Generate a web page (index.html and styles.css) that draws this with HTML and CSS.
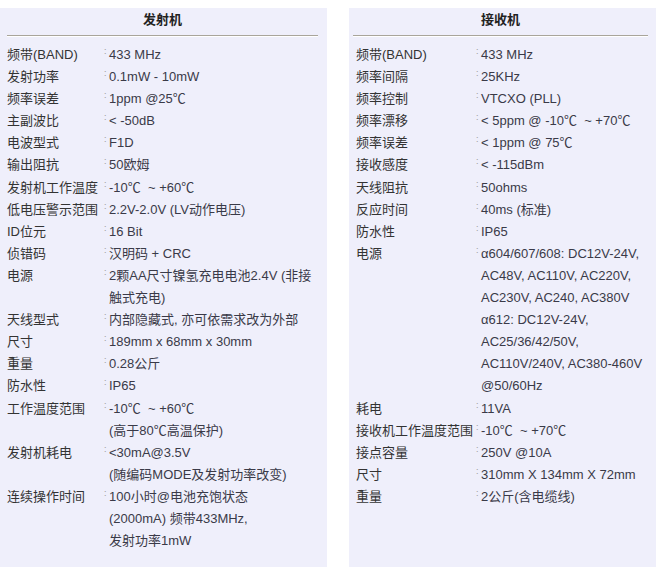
FILE: index.html
```html
<!DOCTYPE html>
<html lang="zh-CN">
<head>
<meta charset="utf-8">
<link rel="stylesheet" href="styles.css">
</head>
<body>
<div class="wrap">
  <section class="panel panel-tx">
    <h2 class="title">发射机</h2>
    <hr class="rule">
    <dl class="specs">
      <dt>频带(BAND)</dt><dd>433 MHz</dd>
      <dt>发射功率</dt><dd>0.1mW - 10mW</dd>
      <dt>频率误差</dt><dd>1ppm @25℃</dd>
      <dt>主副波比</dt><dd>&lt; -50dB</dd>
      <dt>电波型式</dt><dd>F1D</dd>
      <dt>输出阻抗</dt><dd>50欧姆</dd>
      <dt>发射机工作温度</dt><dd>-10℃ &nbsp;~ +60℃</dd>
      <dt>低电压警示范围</dt><dd>2.2V-2.0V (LV动作电压)</dd>
      <dt>ID位元</dt><dd>16 Bit</dd>
      <dt>侦错码</dt><dd>汉明码 + CRC</dd>
      <dt>电源</dt><dd>2颗AA尺寸镍氢充电电池2.4V (非接<br>触式充电)</dd>
      <dt>天线型式</dt><dd>内部隐藏式, 亦可依需求改为外部</dd>
      <dt>尺寸</dt><dd>189mm x 68mm x 30mm</dd>
      <dt>重量</dt><dd>0.28公斤</dd>
      <dt>防水性</dt><dd>IP65</dd>
      <dt>工作温度范围</dt><dd>-10℃ &nbsp;~ +60℃<br>(高于80℃高温保护)</dd>
      <dt>发射机耗电</dt><dd>&lt;30mA@3.5V<br>(随编码MODE及发射功率改变)</dd>
      <dt>连续操作时间</dt><dd>100小时@电池充饱状态<br>(2000mA) 频带433MHz,<br>发射功率1mW</dd>
    </dl>
  </section>
  <section class="panel panel-rx">
    <h2 class="title">接收机</h2>
    <hr class="rule">
    <dl class="specs">
      <dt>频带(BAND)</dt><dd>433 MHz</dd>
      <dt>频率间隔</dt><dd>25KHz</dd>
      <dt>频率控制</dt><dd>VTCXO (PLL)</dd>
      <dt>频率漂移</dt><dd>&lt; 5ppm @ -10℃ &nbsp;~ +70℃</dd>
      <dt>频率误差</dt><dd>&lt; 1ppm @ 75℃</dd>
      <dt>接收感度</dt><dd>&lt; -115dBm</dd>
      <dt>天线阻抗</dt><dd>50ohms</dd>
      <dt>反应时间</dt><dd>40ms (标准)</dd>
      <dt>防水性</dt><dd>IP65</dd>
      <dt>电源</dt><dd>α604/607/608: DC12V-24V,<br>AC48V, AC110V, AC220V,<br>AC230V, AC240, AC380V<br>α612: DC12V-24V,<br>AC25/36/42/50V,<br>AC110V/240V, AC380-460V<br>@50/60Hz</dd>
      <dt>耗电</dt><dd>11VA</dd>
      <dt>接收机工作温度范围</dt><dd>-10℃ &nbsp;~ +70℃</dd>
      <dt>接点容量</dt><dd>250V @10A</dd>
      <dt>尺寸</dt><dd>310mm X 134mm X 72mm</dd>
      <dt>重量</dt><dd>2公斤(含电缆线)</dd>
    </dl>
  </section>
</div>
</body>
</html>
```

FILE: styles.css
```css
html, body {
  margin: 0;
  padding: 0;
  background: #ffffff;
}

body {
  font-family: "Liberation Sans", Arial, "Noto Sans CJK SC", sans-serif;
  font-size: 13px;
  color: #333333;
  height: 567px;
  overflow: hidden;
}

.wrap {
  display: flex;
  gap: 22px;
  padding-top: 8px;
  align-items: stretch;
  height: 567px;
  box-sizing: border-box;
}

.panel {
  background: #efeffb;
  box-sizing: border-box;
}

.panel-tx {
  width: 327px;
  padding: 0 9px 0 7px;
}

.panel-rx {
  width: 307px;
  padding: 0 8px 0 4px;
}

.title {
  margin: 0;
  padding-top: 1px;
  font-size: 13px;
  font-weight: bold;
  line-height: 22px;
  text-align: center;
  color: #222222;
}

.rule {
  margin: 4px 0 7px;
  height: 0;
  border: 0;
  border-top: 1px solid #a9a59b;
  border-bottom: 1px solid #ffffff;
}

.specs {
  margin: 0;
  display: grid;
  line-height: 22.1px;
}

.panel-tx .specs {
  grid-template-columns: 97px 1fr;
}

.panel-rx .specs {
  grid-template-columns: 120px 1fr;
  padding-left: 3px;
}

.specs dt {
  margin: 0;
  color: #333333;
  white-space: nowrap;
}

.specs dd {
  margin: 0;
  position: relative;
  padding-left: 5px;
  color: #3a3a48;
}

.specs dd::before {
  content: ":";
  position: absolute;
  left: 0;
  top: -4px;
  font-size: 9px;
  color: #9a9a9a;
}
```
